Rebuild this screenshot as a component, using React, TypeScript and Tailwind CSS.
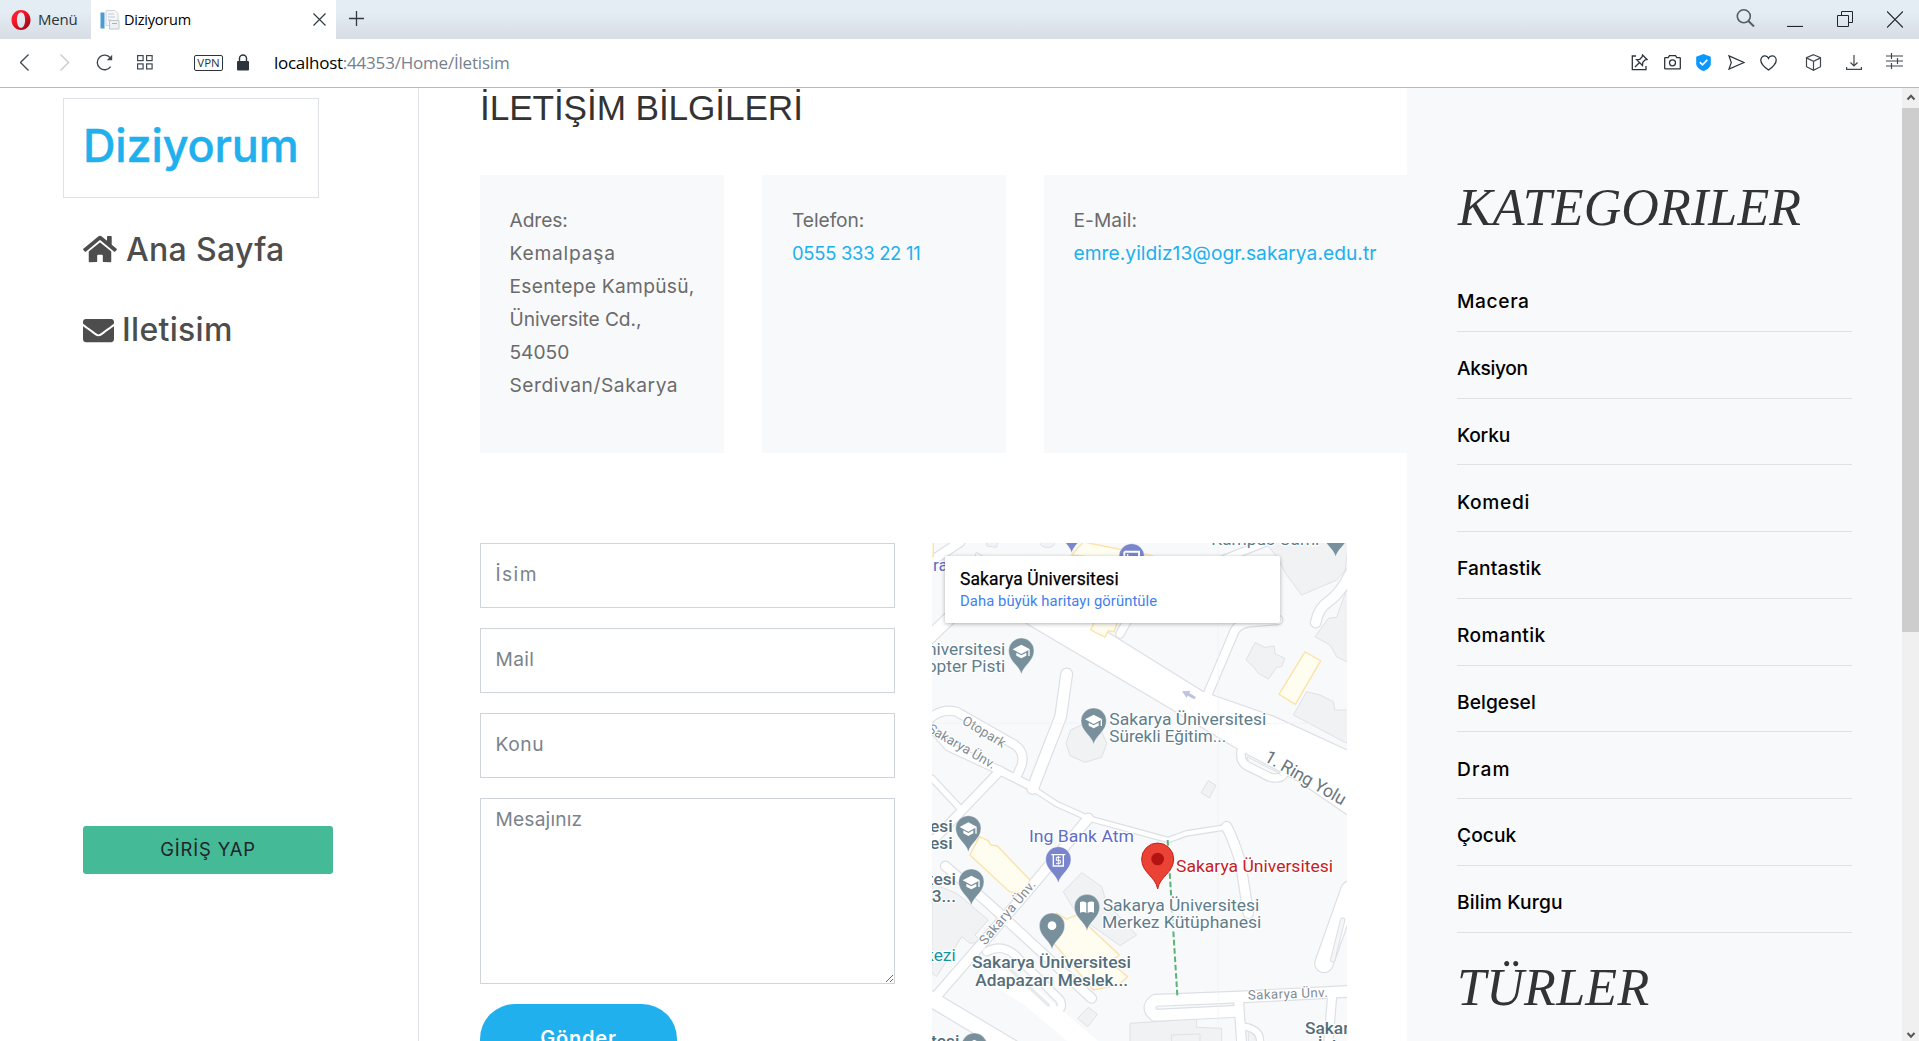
import React from "react";
import { FaHome, FaEnvelope } from "react-icons/fa";

const categories: [string, string][] = [
  ["Macera", "tracking-[0.6px]"],
  ["Aksiyon", "tracking-[-0.37px]"],
  ["Korku", "tracking-[-0.2px]"],
  ["Komedi", "tracking-[0.64px]"],
  ["Fantastik", "tracking-[0.13px]"],
  ["Romantik", "tracking-[0.42px]"],
  ["Belgesel", "tracking-[0.06px]"],
  ["Dram", "tracking-[1.1px]"],
  ["Çocuk", "tracking-[0.06px]"],
  ["Bilim Kurgu", "tracking-[0.18px]"],
];

function OperaLogo() {
  return (
    <svg width="20" height="20" viewBox="0 0 20 20">
      <defs>
        <linearGradient id="opera" x1="0" x2="1" y1="0" y2="1">
          <stop offset="0.3" stopColor="#ff1b2d" />
          <stop offset="1" stopColor="#8f0012" />
        </linearGradient>
      </defs>
      <path
        fill="url(#opera)"
        fillRule="evenodd"
        d="M10 0C4.5 0 .5 4.5.5 10S4.5 20 10 20s9.5-4.5 9.5-10S15.5 0 10 0Zm0 2.2c2.6 0 4.1 3.6 4.1 7.8s-1.5 7.8-4.1 7.8S5.9 14.2 5.9 10 7.4 2.2 10 2.2Z"
      />
    </svg>
  );
}

function Favicon() {
  return (
    <svg width="20" height="20" viewBox="0 0 20 20">
      <rect x="0.5" y="2.5" width="4" height="16" fill="#4a9bd4" />
      <path d="M6 .5h9l3 3v12H6Z" fill="#f4f6f8" stroke="#cfd5da" />
      <path d="M8 4h6M8 7h7M8 10h3" stroke="#c3cad0" />
      <path d="M9.5 10.5h9.5v8.5H9.5Z" fill="#eef1f4" stroke="#bfc7ce" />
      <path d="M12 13.5h5" stroke="#aab3bb" />
    </svg>
  );
}

function TabStrip() {
  return (
    <div className="flex h-[39px] shrink-0 bg-linear-to-b from-[#e4ecf4] from-30% to-[#d6dde5] font-['Open_Sans',sans-serif] text-[#2d343b]">
      <div className="flex w-[91px] items-center gap-[7px] pl-[11px] text-[15px]">
        <OperaLogo />
        <span className="tracking-[-0.2px]">Menü</span>
      </div>
      <div className="flex w-[245px] items-center bg-white pl-[9px]">
        <Favicon />
        <span className="ml-1 text-[14.5px] tracking-[-0.22px] text-black">Diziyorum</span>
        <svg className="ml-auto mr-[10px]" width="13" height="13" viewBox="0 0 13 13" stroke="#333a41" strokeWidth="1.2">
          <path d="M.5.5l12 12M12.5.5l-12 12" />
        </svg>
      </div>
      <svg className="ml-[13px] mt-[11px]" width="15" height="15" viewBox="0 0 15 15" stroke="#333a41" strokeWidth="1.3">
        <path d="M7.5 0v15M0 7.5h15" />
      </svg>
      <div className="ml-auto flex pr-4 pt-[9px]">
        <svg width="19" height="18" viewBox="0 0 19 18" fill="none" stroke="#555c63" strokeWidth="1.6">
          <circle cx="7.8" cy="7.3" r="6.5" />
          <path d="M12.4 12l5.6 5.5" strokeWidth="2" />
        </svg>
        <svg className="ml-8" width="16" height="18" viewBox="0 0 16 18" stroke="#20262b" strokeWidth="1.2">
          <path d="M0 17.5h16" />
        </svg>
        <svg className="ml-[34px]" width="16" height="19" viewBox="0 0 16 19" fill="none" stroke="#20262b">
          <path d="M.5 6.5h11v11H.5zM4.5 6.5v-4h11v11h-4" />
        </svg>
        <svg className="ml-[34px]" width="16" height="19" viewBox="0 0 16 19" stroke="#20262b" strokeWidth="1.2">
          <path d="M0 2.5l16 16M16 2.5l-16 16" />
        </svg>
      </div>
    </div>
  );
}

function AddressBar() {
  return (
    <div className="flex h-[49px] shrink-0 items-center border-b border-[#b2bbc5] bg-white pl-5 pr-4 pb-px font-['Open_Sans',sans-serif]">
      <svg width="9" height="17" viewBox="0 0 9 17" fill="none" stroke="#3f474f" strokeWidth="1.3">
        <path d="M8.5.5l-8 8 8 8" />
      </svg>
      <svg className="ml-[31px]" width="9" height="17" viewBox="0 0 9 17" fill="none" stroke="#c6cace" strokeWidth="1.3">
        <path d="M.5.5l8 8-8 8" />
      </svg>
      <svg className="ml-[27px]" width="17" height="17" viewBox="0 0 17 17" fill="none" stroke="#3f474f" strokeWidth="1.4">
        <path d="M14.6 12.6A7.3 7.3 0 1 1 14.3 3.9" />
        <path d="M16.2.8v5.4h-5.4Z" fill="#3f474f" stroke="none" />
      </svg>
      <svg className="ml-6" width="16" height="15" viewBox="0 0 16 15" fill="none" stroke="#3f474f" strokeWidth="1.2">
        <rect x=".6" y=".6" width="5.5" height="5" />
        <rect x="9.6" y=".6" width="5.5" height="5" />
        <rect x=".6" y="8.9" width="5.5" height="5" />
        <rect x="9.6" y="8.9" width="5.5" height="5" />
      </svg>
      <div className="ml-[41px] flex h-4 w-[29px] items-center justify-center rounded-[2px] border border-[#2b343d] text-[11.5px] font-medium text-[#2b343d]">
        VPN
      </div>
      <svg className="ml-[14px]" width="12" height="17" viewBox="0 0 12 17">
        <path d="M2.5 8V4.5a3.5 3.5 0 0 1 7 0V8" fill="none" stroke="#2b343d" strokeWidth="1.4" />
        <rect y="7" width="12" height="9.5" rx="1" fill="#2b343d" />
      </svg>
      <span className="ml-[25px] text-[17px] tracking-[-0.27px] text-black">localhost</span>
      <span className="text-[17px] tracking-[-0.2px] text-[#75818d]">:44353/Home/İletisim</span>

      <div className="ml-auto flex items-center">
        <svg width="17" height="17" viewBox="0 0 17 17" fill="none" stroke="#2b343d" strokeWidth="1.3">
          <path d="M5 2H1.3v13.7h13.7V12" />
          <path d="M11.5 1l4.5 4.5-1.8.3-2.4 2.5-.3 3.2L5.6 5.6l3.2-.3L11.2 2.8ZM8.3 8.8L4 13" />
        </svg>
        <svg className="ml-4" width="17" height="15" viewBox="0 0 17 15" fill="none" stroke="#2b343d" strokeWidth="1.3">
          <path d="M1.2 2.7h3L5.5.7h6l1.3 2h3q.5 0 .5.5v10.1q0 .6-.5.6H1.2q-.5 0-.5-.6V3.2q0-.5.5-.5Z" />
          <circle cx="8.5" cy="7.8" r="3" />
        </svg>
        <svg className="ml-[15px]" width="15" height="17" viewBox="0 0 15 17">
          <path d="M7.5 0L14.8 2.7V9.5c0 3.6-3.2 6.2-7.3 7.5C3.4 15.7.2 13.1.2 9.5V2.7Z" fill="#0a97ff" />
          <path d="M3.8 8.2l2.7 2.6 4.8-5" fill="none" stroke="#fff" strokeWidth="1.7" />
        </svg>
        <svg className="ml-[17px]" width="17" height="15" viewBox="0 0 17 15" fill="none" stroke="#2b343d" strokeWidth="1.2">
          <path d="M1 .9l15 6.6L1 14.1l2.3-6.6Z" />
        </svg>
        <svg className="ml-[15px]" width="17" height="16" viewBox="0 0 17 16" fill="none" stroke="#2b343d" strokeWidth="1.3">
          <path d="M8.5 15C4 11.8.8 8.7.8 5.2.8 2.7 2.6.8 4.7.8c1.7 0 3.1.9 3.8 2.5.7-1.6 2.1-2.5 3.8-2.5 2.1 0 3.9 1.9 3.9 4.4 0 3.5-3.2 6.6-7.7 9.8Z" />
        </svg>
        <svg className="ml-7" width="17" height="17" viewBox="0 0 17 17" fill="none" stroke="#3f474f" strokeWidth="1.2">
          <path d="M8.5.7l7 3v9l-7 3.6-7-3.6v-9ZM1.5 3.9l7 3.4 7-3.4M8.5 7.3v9" />
        </svg>
        <svg className="ml-6" width="16" height="16" viewBox="0 0 16 16" fill="none" stroke="#3f474f" strokeWidth="1.2">
          <path d="M8 0v11M4.5 7.5L8 11l3.5-3.5M.6 12v2.4h14.8V12" />
        </svg>
        <svg className="mb-[3px] ml-6" width="17" height="16" viewBox="0 0 17 16" fill="none" stroke="#3f474f" strokeWidth="1.2">
          <path d="M0 3h17M0 8h17M0 13h17M5.5 0v6M11.5 5v6M5.5 10v6" />
        </svg>
      </div>
    </div>
  );
}

function Sidebar() {
  return (
    <nav className="w-[419px] shrink-0 border-r border-[#dee2e6] font-['Inter',sans-serif]">
      <div className="ml-[63px] mt-[10px] h-[100px] w-64 border border-[#dee2e6] pl-[19px] pt-[25px]">
        <a className="block text-[45px] leading-[44px] font-medium tracking-[-0.15px] text-[#20b0ee] [-webkit-text-stroke:0.4px_#20b0ee]">Diziyorum</a>
      </div>
      <a className="ml-[83px] mt-[31px] flex h-10 items-center text-[32px] font-medium tracking-[0.33px] text-[#4d4d4d]">
        <FaHome className="h-[30px] w-[34px]" />
        <span className="ml-[9px] pt-px">Ana Sayfa</span>
      </a>
      <a className="ml-[83px] mt-[41px] flex h-10 items-center text-[32px] font-medium tracking-[0.3px] text-[#4d4d4d]">
        <FaEnvelope className="h-[31px] w-[31px]" />
        <span className="ml-2">Iletisim</span>
      </a>
      <button className="ml-[83px] mt-[476px] block h-12 w-[250px] rounded-[3px] bg-[#44ba97] pb-px text-[18.4px] tracking-[0.85px] text-[#212529]">
        GİRİŞ YAP
      </button>
    </nav>
  );
}

function InfoCards() {
  return (
    <div className="mt-[48px] flex h-[278px] gap-[38px] text-[19.2px] leading-[33px] text-[#6b6b6b] *:bg-[#f8f9fb] *:pt-[29px]">
      <div className="w-[244px] shrink-0 pl-[29.5px] *:block *:whitespace-nowrap">
        <span className="tracking-[-0.08px]">Adres:</span>
        <span className="tracking-[0.8px]">Kemalpaşa</span>
        <span className="tracking-[0.28px]">Esentepe Kampüsü,</span>
        <span className="tracking-[-0.1px]">Üniversite Cd.,</span>
        <span className="tracking-[-0.05px]">54050</span>
        <span className="tracking-[0.55px]">Serdivan/Sakarya</span>
      </div>
      <div className="w-[244px] shrink-0 pl-[30px] *:block">
        <span className="tracking-[-0.07px]">Telefon:</span>
        <a className="text-[18.4px] tracking-[-0.27px] text-[#20b0ee]">0555 333 22 11</a>
      </div>
      <div className="flex-1 pl-[29.5px] *:block">
        <span className="tracking-[0.05px]">E-Mail:</span>
        <a className="tracking-[0.04px] text-[#20b0ee]">emre.yildiz13@ogr.sakarya.edu.tr</a>
      </div>
    </div>
  );
}

const inputBase =
  "block w-full border border-[#ced4da] bg-white pl-[14.5px] text-[19.2px] text-[#495057] placeholder:text-[#7b838b] outline-none";

function ContactForm() {
  return (
    <form className="flex w-[415px] shrink-0 flex-col gap-5">
      <input className={inputBase + " h-[65px] pb-[3px] tracking-[1.4px]"} placeholder="İsim" />
      <input className={inputBase + " h-[65px] pb-[3px] tracking-[0.3px]"} placeholder="Mail" />
      <input className={inputBase + " h-[65px] pb-[3px] tracking-[0.6px]"} placeholder="Konu" />
      <textarea className={inputBase + " h-[186px] resize pt-[7px] leading-[27.6px] tracking-[0.17px]"} placeholder="Mesajınız" />
      <button
        type="button"
        className="h-[70px] w-[197px] shrink-0 rounded-full bg-[#20b0ee] pb-[2px] text-[20px] font-semibold tracking-[0.8px] text-white"
      >
        Gönder
      </button>
    </form>
  );
}

/* Streets: centre line and width */
const streets: [string, number][] = [
  ["M36 92L120 36", 26],
  ["M20 330L130 225", 36],
  ["M600 312L640 240", 22],
  ["M860 500L945 300Q960 278 1000 276L1075 270", 24],
  ["M905 90L1040 36", 20],
  ["M1187 278Q1195 235 1225 215Q1262 190 1290 130", 28],
  ["M440 432L422 560L338 775", 32],
  ["M20 575Q60 532 110 545L285 645Q315 665 305 705L290 740", 24],
  ["M20 575L85 650L240 722L345 775", 22],
  ["M240 722L36 935", 24],
  ["M36 745L120 835", 16],
  ["M338 775L410 822L505 865L745 930L800 910L915 892", 13],
  ["M920 890Q945 940 962 1000L985 1150", 28],
  ["M505 865L330 1075L30 1420", 28],
  ["M76 1008L200 1115L515 1405", 26],
  ["M200 1265Q245 1240 285 1275L420 1410Q435 1445 395 1440L300 1375", 22],
  ["M30 1405L290 1560", 44],
  ["M1290 1080L1212 1300", 52],
  ["M1290 1384L960 1401L705 1411Q675 1434 705 1456L950 1444", 32],
  ["M955 1400L965 1540", 26],
  ["M1237 1390L1225 1540", 24],
  ["M975 1490Q1025 1500 1020 1540", 18],
  ["M965 655Q955 700 990 712L1050 742Q1080 748 1090 735", 22],
];
const ring = "M170 70L590 325L850 487L1060 560L1300 670V865L1140 755L960 660L770 545L330 285L150 160Z";

const greyBlocks = [
  "1035,36 1070,80 1098,132 1145,195 1250,150 1276,120 1285,36",
  "1005,338 1035,352 1062,348 1066,372 1095,385 1085,410 1070,412 1045,447 1015,430 1000,410 978,390",
  "1160,485 1200,495 1240,515 1245,540 1290,540 1290,645 1120,555",
  "1290,400 1250,380 1230,345 1185,320 1225,265 1250,262 1290,150",
  "452,600 490,582 540,594 560,640 545,682 495,697 450,677 438,640",
  "865,752 888,766 868,804 843,788",
  "430,1085 485,1028 545,1070 560,1120 650,1215 600,1247 520,1190 475,1160",
  "36,1060 110,1090 205,1170 165,1215 185,1235 150,1240 125,1220 50,1340 36,1330",
  "505,1432 532,1453 503,1490 473,1465",
  "630,1480 750,1472 750,1462 830,1460 830,1492 905,1495 905,1540 630,1540",
  "755,1515 840,1512 840,1540 755,1540",
  "200,39 235,30 230,52 200,48",
  "985,1505 1012,1505 1012,1540 985,1540",
];
const yellowBlocks = [
  "455,75 490,36 700,78 600,90",
  "30,30 40,30 40,80 30,80",
  "522,278 592,278 582,305 565,302 555,321 512,300",
  "1155,366 1202,392 1126,523 1077,493",
  "150,975 178,920 205,932 212,945 232,948 330,1050 312,1090 268,1085",
  "385,1220 410,1150 440,1168 470,1155 598,1275 570,1295 623,1340 595,1365 520,1380",
];

function Pin({ x, y, color, kind }: { x: number; y: number; color: string; kind: string }) {
  return (
    <g transform={`translate(${x} ${y})`}>
      <path d="M0 71C-6 44-38 32-38 0A38 38 0 1 1 38 0C38 32 6 44 0 71Z" fill={color} stroke="#fff" strokeOpacity="0.6" strokeWidth="2" />
      {kind === "cap" && (
        <g fill="#fff">
          <path d="M-26-4L0-18L26-4L0 10Z" />
          <path d="M-15 6V15L0 23L15 15V6L0 14ZM21-3H25V16H21Z" />
        </g>
      )}
      {kind === "dot" && <circle r="13" fill="#fff" />}
      {kind === "book" && <path d="M-21-15Q-10-19-2-13V18Q-10 13-21 17ZM21-15Q10-19 2-13V18Q10 13 21 17Z" fill="#fff" />}
      {kind === "atm" && (
        <g fill="none" stroke="#fff" strokeWidth="4">
          <path d="M-21-14H21M-15-14V20H15V-14" />
          <path d="M7-6H-6V3H6V12H-7M0-10V16" strokeWidth="3" />
        </g>
      )}
      {kind === "bed" && <path d="M-22-14V14M22 14V-14H-22M-14-4H-10" fill="none" stroke="#fff" strokeWidth="6" />}
    </g>
  );
}

const slate = "#78909c";
const indigo = "#7986cb";

function CampusMap() {
  return (
    <div className="relative h-[498px] w-[415px] shrink-0 overflow-hidden font-['Roboto',sans-serif]">
      <svg width="415" height="498" viewBox="36 39 1245 1494" fontFamily="Roboto, sans-serif">
        <rect x="36" y="39" width="1245" height="1494" fill="#f8f9fb" />
        <g fill="#f1f2f4" stroke="#dfe1e5" strokeWidth="3">
          {greyBlocks.map((p) => <polygon key={p} points={p} />)}
        </g>
        <path d="M360 39a22 14 0 0 0 44 0" fill="#f1f2f4" stroke="#dfe1e5" strokeWidth="3" />
        <g fill="none" stroke="#dcdfe4" strokeLinecap="round" strokeLinejoin="round">
          {streets.map(([d, w]) => <path key={d} d={d} strokeWidth={w + 7} />)}
          <path d={ring} strokeWidth="7" />
        </g>
        <g fill="none" stroke="#fff" strokeLinecap="round" strokeLinejoin="round">
          {streets.map(([d, w]) => <path key={d} d={d} strokeWidth={w} />)}
          <path d={ring} fill="#fff" stroke="none" />
          <path d="M250 1350L330 1400L520 1560" strokeWidth="60" />
        </g>
        <path d="M985 692Q978 675 985 682L1050 716Q1072 722 1085 738" fill="none" stroke="#dcdfe4" strokeWidth="3" />
        <path d="M240 1290L385 1425" stroke="#e8eaee" strokeWidth="10" strokeLinecap="round" />
        <path d="M1268 1170L1238 1290" stroke="#dcdfe4" strokeWidth="16" strokeLinecap="round" />
        <path d="M1268 1170L1238 1290" stroke="#f5f6f8" strokeWidth="10" strokeLinecap="round" />
        <g fill="#fffcf0" stroke="#fbe3a6" strokeWidth="4">
          {yellowBlocks.map((p) => <polygon key={p} points={p} />)}
        </g>
        <path d="M895 39V1533M36 580H1281" stroke="#eff1f4" strokeWidth="2" />
        <path d="M786 484L812 482L808 489L828 501L823 508L803 497L800 504Z" fill="#c0c4dc" />
        <path d="M743 930L772 1396" stroke="#58b476" strokeWidth="6" strokeDasharray="17 8" />

        <Pin x={304} y={362} color={slate} kind="cap" />
        <Pin x={521} y={572} color={slate} kind="cap" />
        <Pin x={145} y={895} color={slate} kind="cap" />
        <Pin x={154} y={1055} color={slate} kind="cap" />
        <Pin x={163} y={1547} color={slate} kind="cap" />
        <Pin x={1247} y={10} color={slate} kind="" />
        <Pin x={455} y={-2} color={indigo} kind="" />
        <Pin x={635} y={79} color={indigo} kind="bed" />
        <Pin x={415} y={988} color={indigo} kind="atm" />
        <Pin x={501} y={1131} color={slate} kind="book" />
        <Pin x={396} y={1187} color={slate} kind="dot" />
        <g transform="translate(713 987)">
          <path d="M0 90C-6 52-48 42-48 0A48 48 0 1 1 48 0C48 42 6 52 0 90Z" fill="#ea4335" stroke="#c5221f" strokeWidth="3" />
          <circle r="19" fill="#b31412" />
        </g>

        <g fontSize="52" fill="#607d8b" stroke="#fff" strokeWidth="7" strokeLinejoin="round" paintOrder="stroke">
          <text x="874" y="46" textLength="324" lengthAdjust="spacingAndGlyphs">Kampüs Cami</text>
          <text x="256" y="374" textAnchor="end">niversitesi</text>
          <text x="256" y="425" textAnchor="end">opter Pisti</text>
          <text x="568" y="585" textLength="471" lengthAdjust="spacingAndGlyphs">Sakarya Üniversitesi</text>
          <text x="568" y="636" textLength="351" lengthAdjust="spacingAndGlyphs">Sürekli Eğitim...</text>
          <text x="548" y="1143" textLength="470" lengthAdjust="spacingAndGlyphs">Sakarya Üniversitesi</text>
          <text x="546" y="1194" textLength="478" lengthAdjust="spacingAndGlyphs">Merkez Kütüphanesi</text>
          <text x="327" y="936" textLength="315" lengthAdjust="spacingAndGlyphs" fill="#5f6dc4">Ing Bank Atm</text>
          <text x="84" y="122" textAnchor="end" fill="#5f6dc4">ira</text>
          <text x="107" y="1293" textAnchor="end" fill="#15959b">kezi</text>
          <text x="768" y="1026" textLength="471" lengthAdjust="spacingAndGlyphs" fill="#c5221f">Sakarya Üniversitesi</text>
          <g fill="#546e7a" fontWeight="500">
            <text x="98" y="905" textAnchor="end">esi</text>
            <text x="98" y="957" textAnchor="end">esi</text>
            <text x="108" y="1065" textAnchor="end">tesi</text>
            <text x="108" y="1117" textAnchor="end">13...</text>
            <text x="156" y="1315" textLength="477" lengthAdjust="spacingAndGlyphs">Sakarya Üniversitesi</text>
            <text x="166" y="1367" textLength="458" lengthAdjust="spacingAndGlyphs">Adapazarı Meslek...</text>
            <text x="1155" y="1512">Sakar</text>
            <text x="1193" y="1564">İst</text>
            <text x="118" y="1551" textAnchor="end">tesi</text>
          </g>
        </g>
        <g fill="#828c94" stroke="#fff" strokeWidth="6" strokeLinejoin="round" paintOrder="stroke" fontSize="40">
          <text transform="translate(124 580) rotate(31)" textLength="143">Otopark</text>
          <text transform="translate(20 604) rotate(30)" textLength="228">Sakarya Ünv.</text>
          <text transform="translate(196 1247) rotate(-50)" textLength="238">Sakarya Ünv.</text>
          <text transform="translate(984 1409) rotate(-2)" textLength="240">Sakarya Ünv.</text>
          <text transform="translate(1030 691) rotate(30)" fontSize="53" fill="#6b767e" textLength="272">1. Ring Yolu</text>
        </g>
      </svg>
      <div className="absolute left-[13px] top-[13px] h-[67px] w-[335px] rounded-[2px] bg-white pl-[15px] pt-[13px] shadow-[0_1px_4px_rgba(0,0,0,0.3)]">
        <div className="text-[17.5px] leading-[20px] font-normal tracking-[0.1px] text-black [-webkit-text-stroke:0.25px_black]">Sakarya Üniversitesi</div>
        <div className="mt-[3px] text-[14.8px] leading-[18px] tracking-[0.08px] text-[#427fed]">Daha büyük haritayı görüntüle</div>
      </div>
    </div>
  );
}

function Aside() {
  return (
    <aside className="w-[495px] shrink-0 bg-[#f8f9fb] px-[50px] pt-[90px]">
      <h2 className="ml-px font-['Liberation_Serif',serif] text-[52px] leading-[60px] tracking-[0.12px] text-[#333] italic">KATEGORILER</h2>
      <ul className="mt-[27px] font-['Inter',sans-serif] text-[19.2px] leading-[28px] font-medium text-black">
        {categories.map(([name, tracking]) => (
          <li key={name} className="flex h-[66.75px] items-end border-b border-[#dee2e6] pb-[15.5px]">
            <a className={tracking}>{name}</a>
          </li>
        ))}
      </ul>
      <h2 className="mt-[25px] font-['Liberation_Serif',serif] text-[52px] leading-[60px] tracking-[0.3px] text-[#333] italic">TÜRLER</h2>
    </aside>
  );
}

function Scrollbar() {
  return (
    <div className="flex w-[17px] shrink-0 flex-col bg-[#f0f0f0]">
      <svg width="17" height="20" viewBox="0 0 17 20" fill="none" stroke="#555" strokeWidth="2">
        <path d="M5.5 11.5L9 7.8L12.5 11.5" />
      </svg>
      <div className="h-[524px] bg-[#cdcdcd]" />
      <svg className="mt-auto" width="17" height="17" viewBox="0 0 17 17" fill="none" stroke="#555" strokeWidth="2">
        <path d="M5.5 9L9 12.7L12.5 9" />
      </svg>
    </div>
  );
}

export default function App() {
  return (
    <div className="flex h-[1041px] w-[1919px] flex-col overflow-hidden bg-white">
      <TabStrip />
      <AddressBar />
      <div className="flex min-h-0 flex-1 overflow-hidden">
        <Sidebar />
        <main className="w-[988px] shrink-0 pl-[61px] pt-px font-['Inter',sans-serif]">
          <h1 className="font-['Liberation_Sans',sans-serif] text-[35.2px] leading-[38px] tracking-[-0.1px] text-[#333]">
            İLETİŞİM BİLGİLERİ
          </h1>
          <InfoCards />
          <div className="mt-[90px] flex gap-[37px]">
            <ContactForm />
            <CampusMap />
          </div>
        </main>
        <Aside />
        <Scrollbar />
      </div>
    </div>
  );
}
